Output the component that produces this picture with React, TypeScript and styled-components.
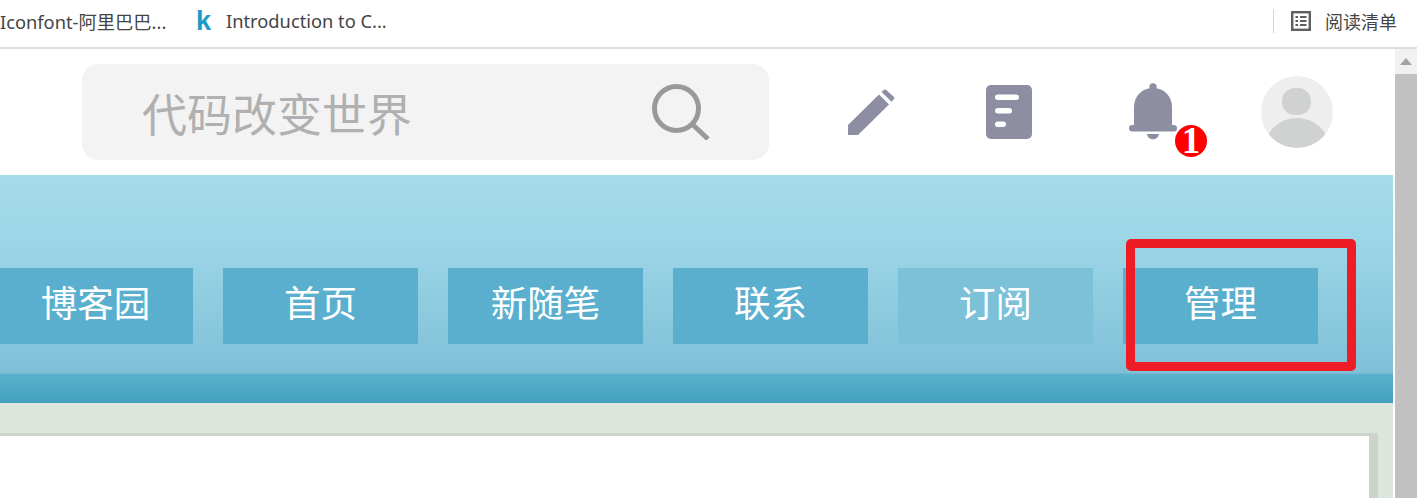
import React from "react";
import styled, { createGlobalStyle } from "styled-components";

const GlobalStyle = createGlobalStyle`
  html, body {
    margin: 0;
    padding: 0;
    height: 100%;
    overflow: hidden;
    background: #fff;
  }
  #root {
    height: 100%;
  }
`;

const Page = styled.div`
  width: 1417px;
  height: 498px;
  position: relative;
  overflow: hidden;
  display: flex;
  flex-direction: column;
  font-family: "Noto Sans", "Noto Sans CJK SC", sans-serif;
`;

const Bookmarks = styled.div`
  height: 49px;
  flex: none;
  box-sizing: border-box;
  border-bottom: 2px solid #dcdce0;
  padding-bottom: 6px;
  display: flex;
  align-items: center;
  color: #444;
  font-size: 18.3px;
  white-space: nowrap;
`;

const Mark = styled.span<{ $width: number }>`
  width: ${(p) => p.$width}px;
  flex: none;
`;

const KLogo = styled.span`
  flex: none;
  width: 30px;
  margin-left: 31px;
  color: #1a9ac7;
  font-family: "Liberation Sans", sans-serif;
  font-weight: 700;
  font-size: 27px;
  line-height: 30px;
`;

const ReadingList = styled.div`
  margin-left: auto;
  display: flex;
  align-items: center;
  width: 144px;
  height: 24px;
  border-left: 1px solid #d4d4d4;
  padding-left: 17px;
  box-sizing: border-box;
  gap: 14px;
  font-size: 18px;
`;

const Body = styled.div`
  flex: 1;
  display: flex;
  min-height: 0;
`;

const Content = styled.div`
  width: 1393px;
  flex: none;
  display: flex;
  flex-direction: column;
`;

const Scrollbar = styled.div`
  flex: 1;
  margin-left: 2px;
  background: #f1f1f1;
  display: flex;
  flex-direction: column;
`;

const ScrollArrow = styled.div`
  height: 25px;
  flex: none;
  display: flex;
  align-items: center;
  justify-content: center;
`;

const ScrollThumb = styled.div`
  flex: 1;
  background: #c1c1c1;
`;

const Header = styled.header`
  height: 126px;
  flex: none;
  background: #fff;
  display: flex;
  align-items: center;
  padding-left: 82px;
  box-sizing: border-box;
`;

const Search = styled.div`
  width: 687px;
  height: 96px;
  background: #f3f3f3;
  border-radius: 16px;
  display: flex;
  align-items: center;
  justify-content: space-between;
  padding: 0 59px 0 60px;
  box-sizing: border-box;
  color: #b0b0b0;
  font-size: 45px;
`;

const IconRow = styled.div`
  display: flex;
  align-items: center;
  margin-left: 79px;
`;

const IconSlot = styled.div<{ $width: number }>`
  width: ${(p) => p.$width}px;
  height: 72px;
  flex: none;
  position: relative;
  display: flex;
  align-items: center;
`;

const Badge = styled.span`
  position: absolute;
  left: 46px;
  top: 49px;
  width: 32px;
  height: 32px;
  border-radius: 50%;
  background: #f00;
  color: #fff;
  display: flex;
  align-items: center;
  justify-content: center;
  font-family: "Liberation Serif", serif;
  font-weight: 700;
  font-size: 37px;
  line-height: 32px;
`;

const Banner = styled.div`
  height: 198px;
  flex: none;
  background: linear-gradient(180deg, #a5dcea 0%, #9cd5e6 35%, #7fc0d7 100%);
  padding-top: 93px;
  box-sizing: border-box;
  overflow: hidden;
`;

const NavList = styled.nav`
  display: flex;
  gap: 30px;
  margin-left: -2px;
`;

const NavItem = styled.a<{ $dim?: boolean }>`
  width: 195px;
  height: 76px;
  flex: none;
  background: ${(p) => (p.$dim ? "#7cc1d7" : "#5bafce")};
  color: #fff;
  font-size: 36.5px;
  display: flex;
  align-items: center;
  justify-content: center;
  padding-bottom: 9px;
  box-sizing: border-box;
`;

const Strip = styled.div`
  height: 30px;
  flex: none;
  background: linear-gradient(180deg, #5ab2cd 0%, #44a1bf 100%);
  border-top: 1px solid #72b9d1;
  box-sizing: border-box;
`;

const Main = styled.div`
  flex: 1;
  background: #dde6dd;
  padding: 30px 15px 0 0;
  display: flex;
  min-height: 0;
`;

const Card = styled.div`
  flex: 1;
  background: #fff;
  border-top: 3px solid #cbd4cb;
  border-right: 9px solid #cbd4cb;
`;

// the red annotation drawn over the screenshot
const Annotation = styled.div`
  position: absolute;
  left: 1126px;
  top: 239px;
  width: 230px;
  height: 132px;
  box-sizing: border-box;
  border: 9px solid #ee1c25;
  border-radius: 5px;
`;

const navItems = ["博客园", "首页", "新随笔", "联系", "订阅", "管理"];

export default function App() {
  return (
    <Page>
      <GlobalStyle />
      <Bookmarks>
        <Mark $width={165}>Iconfont-阿里巴巴...</Mark>
        <KLogo>k</KLogo>
        <Mark $width={170}>Introduction to C...</Mark>
        <ReadingList>
          <svg width="20" height="20" viewBox="0 0 20 20">
            <rect x="1.200" y="1.200" width="17.600" height="17.600" fill="none" stroke="#5f5f5f" strokeWidth="2.400" />
            <path d="M4.500 6h2.500M9 6h6.500M4.500 10h2.500M9 10h6.500M4.500 14h2.500M9 14h6.500" stroke="#5f5f5f" strokeWidth="2" />
          </svg>
          <span>阅读清单</span>
        </ReadingList>
      </Bookmarks>
      <Body>
        <Content>
          <Header>
            <Search>
              <span>代码改变世界</span>
              <svg width="58" height="56" viewBox="0 0 58 56">
                <circle cx="24.500" cy="24.500" r="22" fill="none" stroke="#999" strokeWidth="5" />
                <path d="M40 40L56 55" stroke="#999" strokeWidth="5" />
              </svg>
            </Search>
            <IconRow>
              <IconSlot $width={138}>
                <svg width="47" height="47" viewBox="0 0 47 47">
                  <path d="M0 36L31 5.500L41 15.500L10 46H0Z" fill="#8e8ea3" />
                  <path d="M33.500 3L36 .8Q37 0 38 .8L46 8Q47 9 46 10L43.500 12.800Z" fill="#8e8ea3" />
                </svg>
              </IconSlot>
              <IconSlot $width={143}>
                <svg width="46" height="54" viewBox="0 0 46 54">
                  <rect width="46" height="54" rx="5" fill="#8e8ea3" />
                  <rect x="9" y="9.500" width="24" height="5.500" rx="2.700" fill="#fff" />
                  <rect x="9" y="23" width="17" height="5.500" rx="2.700" fill="#fff" />
                  <rect x="9" y="36.500" width="11" height="5.500" rx="2.700" fill="#fff" />
                </svg>
              </IconSlot>
              <IconSlot $width={132}>
                <svg width="48" height="58" viewBox="0 0 48 58">
                  <circle cx="24" cy="4" r="3.700" fill="#8e8ea3" />
                  <path d="M5 44V24C5 13 13 5 24 5S43 13 43 24V44Z" fill="#8e8ea3" />
                  <rect x="0" y="42" width="48" height="6.500" rx="3.200" fill="#8e8ea3" />
                  <path d="M18 51H30C29 58 19 58 18 51Z" fill="#8e8ea3" />
                </svg>
                <Badge>1</Badge>
              </IconSlot>
              <svg width="72" height="72" viewBox="0 0 72 72">
                <defs>
                  <clipPath id="avatarClip">
                    <circle cx="36" cy="36" r="36" />
                  </clipPath>
                </defs>
                <circle cx="36" cy="36" r="36" fill="#eeeeee" />
                <g clipPath="url(#avatarClip)" fill="#d0d2d1">
                  <rect x="21" y="12" width="29" height="27" rx="13" />
                  <ellipse cx="36" cy="72" rx="32" ry="30" />
                </g>
              </svg>
            </IconRow>
          </Header>
          <Banner>
            <NavList>
              {navItems.map((label) => (
                <NavItem key={label} $dim={label === "订阅"}>
                  {label}
                </NavItem>
              ))}
            </NavList>
          </Banner>
          <Strip />
          <Main>
            <Card />
          </Main>
        </Content>
        <Scrollbar>
          <ScrollArrow>
            <svg width="12" height="7" viewBox="0 0 12 7">
              <path d="M0 7L6 0L12 7Z" fill="#a3a3a3" />
            </svg>
          </ScrollArrow>
          <ScrollThumb />
        </Scrollbar>
      </Body>
      <Annotation />
    </Page>
  );
}
